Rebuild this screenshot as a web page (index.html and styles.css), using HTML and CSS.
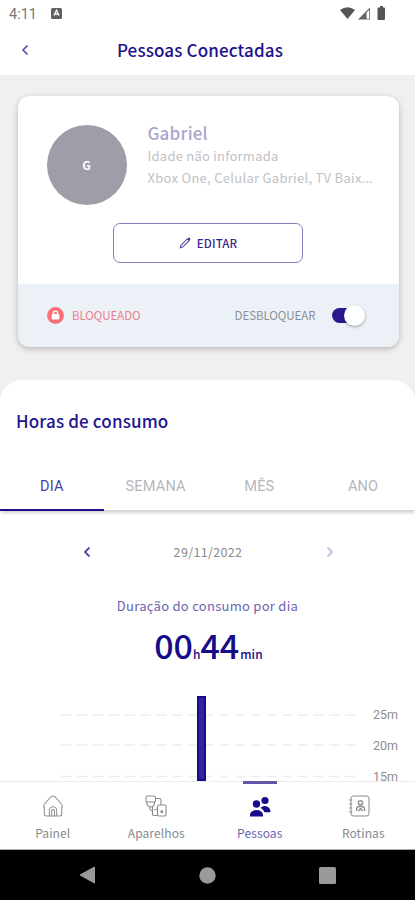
FILE: index.html
```html
<!DOCTYPE html>
<html lang="pt-BR">
<head>
<meta charset="utf-8">
<meta name="viewport" content="width=device-width, initial-scale=1">
<title>Pessoas Conectadas</title>
<link rel="stylesheet" href="styles.css">
</head>
<body>
<div class="screen">
  <div class="status">
    <span class="clock">4:11</span>
    <svg class="status-app" width="11" height="11" viewBox="0 0 11 11"><rect width="11" height="11" rx="1.5" fill="#606060"/><path d="M3 7.5 5.500 2.300 8 7.500M4 6h3" fill="none" stroke="#fff" stroke-width="1.300"/></svg>
    <svg class="status-signal" width="48" height="16" viewBox="0 0 48 16"><path d="M1 4Q8.500-1.500 16 4L8.500 13Z" fill="#555"/><path d="M31 1.500V13.500H19Z" fill="#666"/><path d="M27.600 6.500 30.200 4v8.800h-2.600Z" fill="#fff"/><path d="M41 0h3v1.500H45q1 0 1 1V13q0 1-1 1h-5.500q-1 0-1-1V2.500q0-1 1-1H41Z" fill="#555"/></svg>
  </div>
  <header class="appbar">
    <svg class="back" width="8" height="12" viewBox="0 0 8 12"><path d="M6.500 1.500 2 6l4.500 4.500" fill="none" stroke="#4a42a4" stroke-width="1.500"/></svg>
    <h1>Pessoas Conectadas</h1>
  </header>
  <main>
    <section class="card">
      <div class="profile">
        <div class="avatar">G</div>
        <div class="info">
          <h2>Gabriel</h2>
          <p class="age">Idade não informada</p>
          <p class="devices">Xbox One, Celular Gabriel, TV Baix...</p>
        </div>
      </div>
      <button class="edit">
        <svg width="12" height="12" viewBox="0 0 14 14"><path d="M1.500 12.500 2.200 9.700 9.700 2.200 11.800 4.300 4.300 11.800Z" fill="none" stroke="#5148a0" stroke-width="1.200"/><path d="M9.800 2.100 11 .9q.6-.5 1.100 0l1 1q.5.500 0 1.100l-1.200 1.200Z" fill="#342a92"/></svg>
        <span>EDITAR</span>
      </button>
      <div class="access">
        <svg width="17" height="17" viewBox="0 0 17 17"><circle cx="8.500" cy="8.500" r="8.400" fill="#f87078"/><rect x="4.700" y="7" width="7.600" height="5.600" rx="1" fill="#fff"/><path d="M6.300 7.500V6.300a2.200 2.200 0 0 1 4.400 0v1.200" fill="none" stroke="#fff" stroke-width="1.300"/></svg>
        <span class="blocked">BLOQUEADO</span>
        <span class="unblock">DESBLOQUEAR</span>
        <span class="switch"><i></i></span>
      </div>
    </section>
    <section class="sheet">
      <h2>Horas de consumo</h2>
      <nav class="tabs"><span class="tab active">DIA</span><span class="tab">SEMANA</span><span class="tab">MÊS</span><span class="tab">ANO</span></nav>
      <div class="date">
        <svg width="8" height="12" viewBox="0 0 8 12"><path d="M6.500 1.500 2 6l4.500 4.500" fill="none" stroke="#5149a6" stroke-width="1.800"/></svg>
        <span>29/11/2022</span>
        <svg width="8" height="12" viewBox="0 0 8 12"><path d="m1.500 1.500 4.500 4.500-4.500 4.500" fill="none" stroke="#c3c0e6" stroke-width="1.800"/></svg>
      </div>
      <p class="caption">Duração do consumo por dia</p>
      <p class="total"><b>00</b><small class="hour">h</small><b>44</b><small class="minute">min</small></p>
      <div class="chart">
        <svg class="plot" width="300" height="88" viewBox="0 0 300 88"><path d="M1 21h298M1 51h298M1 82.500h298" stroke="#eeeef0" stroke-width="1.400" stroke-dasharray="10.500 5.300"/><rect x="137" y="2" width="9" height="86" fill="#15098c"/><rect x="138.800" y="4" width="5.400" height="81" fill="#312597"/></svg>
        <div class="scale"><span>25m</span><span>20m</span><span>15m</span></div>
      </div>
    </section>
  </main>
  <nav class="bottom">
    <div class="item">
      <svg width="22" height="22" viewBox="0 0 22 22" fill="none" stroke="#8c9196" stroke-width="1.050" stroke-linejoin="round"><path d="M8.900 1.900q2.100-1.800 4.200 0L19 8.500q1 1.100 1.500 3.500h-.8v7q0 2-2 2H4.300q-2 0-2-2v-7h-.8Q2 9.600 3 8.500ZM7.300 21v-5.500a3.700 3.700 0 0 1 7.400 0V21M9.600 21v-5a1.400 1.400 0 0 1 2.800 0v5"/></svg>
      <span>Painel</span>
    </div>
    <div class="item">
      <svg width="22" height="22" viewBox="0 0 22 22" fill="none" stroke="#878c91" stroke-width="1.100"><path d="M2.500 1H9q1.500 0 1.500 1.500v3Q10.500 7 9 7H2.500Q1 7 1 5.500v-3Q1 1 2.500 1ZM2 7.300v2.200l2.500 2.300h2.800L9.500 9.500V7.300M10.500 3.500h4q1.500 0 1.500 1.500v5M5 12v2q0 1.500 1.500 1.500h1M7.500 12v7q0 1.500 1.500 1.500h3.500M9.500 14.500h3"/><rect x="12.500" y="10" width="8.500" height="11" rx="1.500"/><circle cx="16.800" cy="16.800" r=".9" fill="#878c91"/></svg>
      <span>Aparelhos</span>
    </div>
    <div class="item current">
      <svg width="22" height="22" viewBox="0 0 22 22" fill="#15098c"><circle cx="7.500" cy="9" r="3.700"/><path d="M1 21.500V20a6.500 5 0 0 1 13 0v1.500Z"/><circle cx="16" cy="5.500" r="3.600"/><path d="M11.500 12.700q3-2.700 6.500-1.100 3.500 1.500 3.500 5.700h-6q-1-3.100-4-4.600Z"/></svg>
      <span>Pessoas</span>
    </div>
    <div class="item routines">
      <svg width="22" height="22" viewBox="0 0 22 22" fill="none" stroke="#85898e" stroke-width="1"><rect x="2" y="1" width="18" height="20" rx="2.500"/><path d="M.3 5h3M.3 9h3M.3 13h3M.3 17h3"/><circle cx="11.500" cy="7.800" r="2.100" stroke-width="1.300"/><path d="M7.500 16v-1.300q0-3.500 4-3.500t4 3.500V16M9.500 16l2-2.500 2 2.500" stroke-width="1.400"/></svg>
      <span>Rotinas</span>
    </div>
  </nav>
  <footer class="system">
    <svg width="17" height="18" viewBox="0 0 17 18"><path d="M15.500 1v16L1 9Z" fill="#999" stroke="#999" stroke-linejoin="round"/></svg>
    <svg width="17" height="17" viewBox="0 0 17 17"><circle cx="8.500" cy="8.500" r="8.200" fill="#999"/></svg>
    <svg width="17" height="17" viewBox="0 0 17 17"><rect width="17" height="17" rx="1.500" fill="#999"/></svg>
  </footer>
</div>
</body>
</html>
```
FILE: styles.css
```css
* { box-sizing: border-box; }
body { margin: 0; font-family: "Noto Sans CJK SC", sans-serif; }
h1, h2, p { margin: 0; white-space: nowrap; }
svg { display: block; flex: none; }
.screen { width: 415px; height: 900px; display: flex; flex-direction: column; background: #fff; overflow: hidden; }
.status { height: 28px; flex: none; display: flex; padding: 6px 28px 0 9px; }
.clock { width: 42px; font: 14.500px/17px Roboto, sans-serif; color: #777; }
.status-app { margin-top: 2px; }
.status-signal { margin-left: auto; }
.appbar { height: 47px; flex: none; display: grid; grid-template-columns: 93px 214px 108px; align-items: center; }
.back { margin: -3px 0 0 21px; }
.appbar h1 { margin-top: -4px; justify-self: center; font-size: 17px; line-height: 24px; font-weight: 500; letter-spacing: .15px; color: #1d118c; }
main { height: 706px; flex: none; background: #f0f0f0; padding-top: 20.500px; overflow: hidden; }
.card { width: 381px; height: 251px; margin-left: 17.500px; border-radius: 12px; background: #fff; box-shadow: 0 2px 6px rgba(0,0,0,.24); overflow: hidden; }
.profile { height: 127px; padding: 29.500px 0 0 29px; display: flex; }
.avatar { width: 80px; height: 80px; flex: none; border-radius: 50%; background: #9e9da8; color: #fff; font-size: 12px; font-weight: 700; line-height: 79px; text-align: center; }
.info { margin-left: 21px; }
.info h2 { font-size: 17px; line-height: 15px; height: 20px; font-weight: 500; letter-spacing: .2px; color: #aaa5d0; }
.info p { height: 22px; font-size: 13px; line-height: 22px; color: #bfc1c6; }
.age { letter-spacing: .23px; }
.info .devices { letter-spacing: .29px; line-height: 21px; }
.edit { width: 190px; height: 40px; margin: 0 0 0 95.500px; padding: 0; display: flex; align-items: center; justify-content: center; gap: 6px; background: #fff; border: 1.500px solid #8780bd; border-radius: 7px; font: 500 11.500px/20px "Noto Sans CJK SC", sans-serif; letter-spacing: .1px; color: #33298d; }
.access { height: 62.500px; margin-top: 21.500px; background: #ecf1f8; display: flex; align-items: center; padding: 0 35.500px 0 29.500px; font-size: 11.500px; line-height: 20px; }
.blocked { margin-left: 8px; letter-spacing: -.05px; color: #ec8088; }
.unblock { margin-left: auto; letter-spacing: -.05px; color: #8b8f96; }
.switch { width: 31px; height: 15px; margin-left: 16.500px; border-radius: 8px; background: #28198f; }
.switch i { display: block; width: 21px; height: 21px; margin: -3px 0 0 12px; border-radius: 50%; background: #fff; box-shadow: 0 1px 3px rgba(0,0,0,.35); }
.sheet { height: 410px; margin-top: 33.500px; border-radius: 22px 22px 0 0; background: #fff; }
.sheet h2 { padding: 29px 0 0 16px; height: 80px; font-size: 17px; line-height: 23px; font-weight: 500; letter-spacing: .15px; color: #211590; }
.tabs { height: 51px; display: grid; grid-template-columns: repeat(4, 1fr); box-shadow: 0 3px 3px -1px rgba(0,0,0,.18); border-bottom: 1px solid #d9d9dc; }
.tab { height: 51px; font: 14.500px/53px Roboto, sans-serif; letter-spacing: .2px; text-align: center; color: #b6b6ba; }
.tab.active { color: #4a41a2; border-bottom: 2px solid #1d108c; }
.date { height: 82px; display: grid; grid-template-columns: 8px 1fr 8px; align-items: center; padding: 0 81.500px 0 82.500px; font-size: 12.500px; line-height: 18px; letter-spacing: .35px; color: #8a8a8f; text-align: center; }
.caption { height: 26px; line-height: 26px; font-size: 13px; letter-spacing: .28px; text-align: center; color: #6b64b2; }
.total { height: 51px; margin-bottom: 24px; padding-left: 2px; display: flex; align-items: baseline; justify-content: center; line-height: 51px; color: #160b88; }
.total b { font-size: 34px; font-weight: 500; }
.total small { font-size: 12px; font-weight: 500; }
.minute { margin-left: 1px; letter-spacing: .1px; }
.chart { height: 87px; display: flex; padding-left: 60px; overflow: hidden; }
.scale { width: 38px; text-align: right; font: 12.500px/31px Roboto, sans-serif; color: #8d8d91; padding-top: 5px; }
.scale span { display: block; height: 31px; }
.bottom { height: 69px; flex: none; display: grid; grid-template-columns: repeat(4, 1fr); padding-left: 1px; border-top: 1px solid #ececee; border-bottom: 1px solid #aaa; }
.item { padding-top: 13px; display: flex; flex-direction: column; align-items: center; font-size: 12px; line-height: 20px; letter-spacing: .1px; color: #858a90; position: relative; }
.item span { margin-top: 6px; }
.routines svg { margin-right: 6px; }
.current { color: #6b64b2; }
.current::before { content: ""; position: absolute; top: -1px; width: 34px; height: 2.500px; background: #6057a8; }
.system { height: 50px; flex: none; display: flex; justify-content: space-between; align-items: center; padding: 0 79px; background: #000; }
```
